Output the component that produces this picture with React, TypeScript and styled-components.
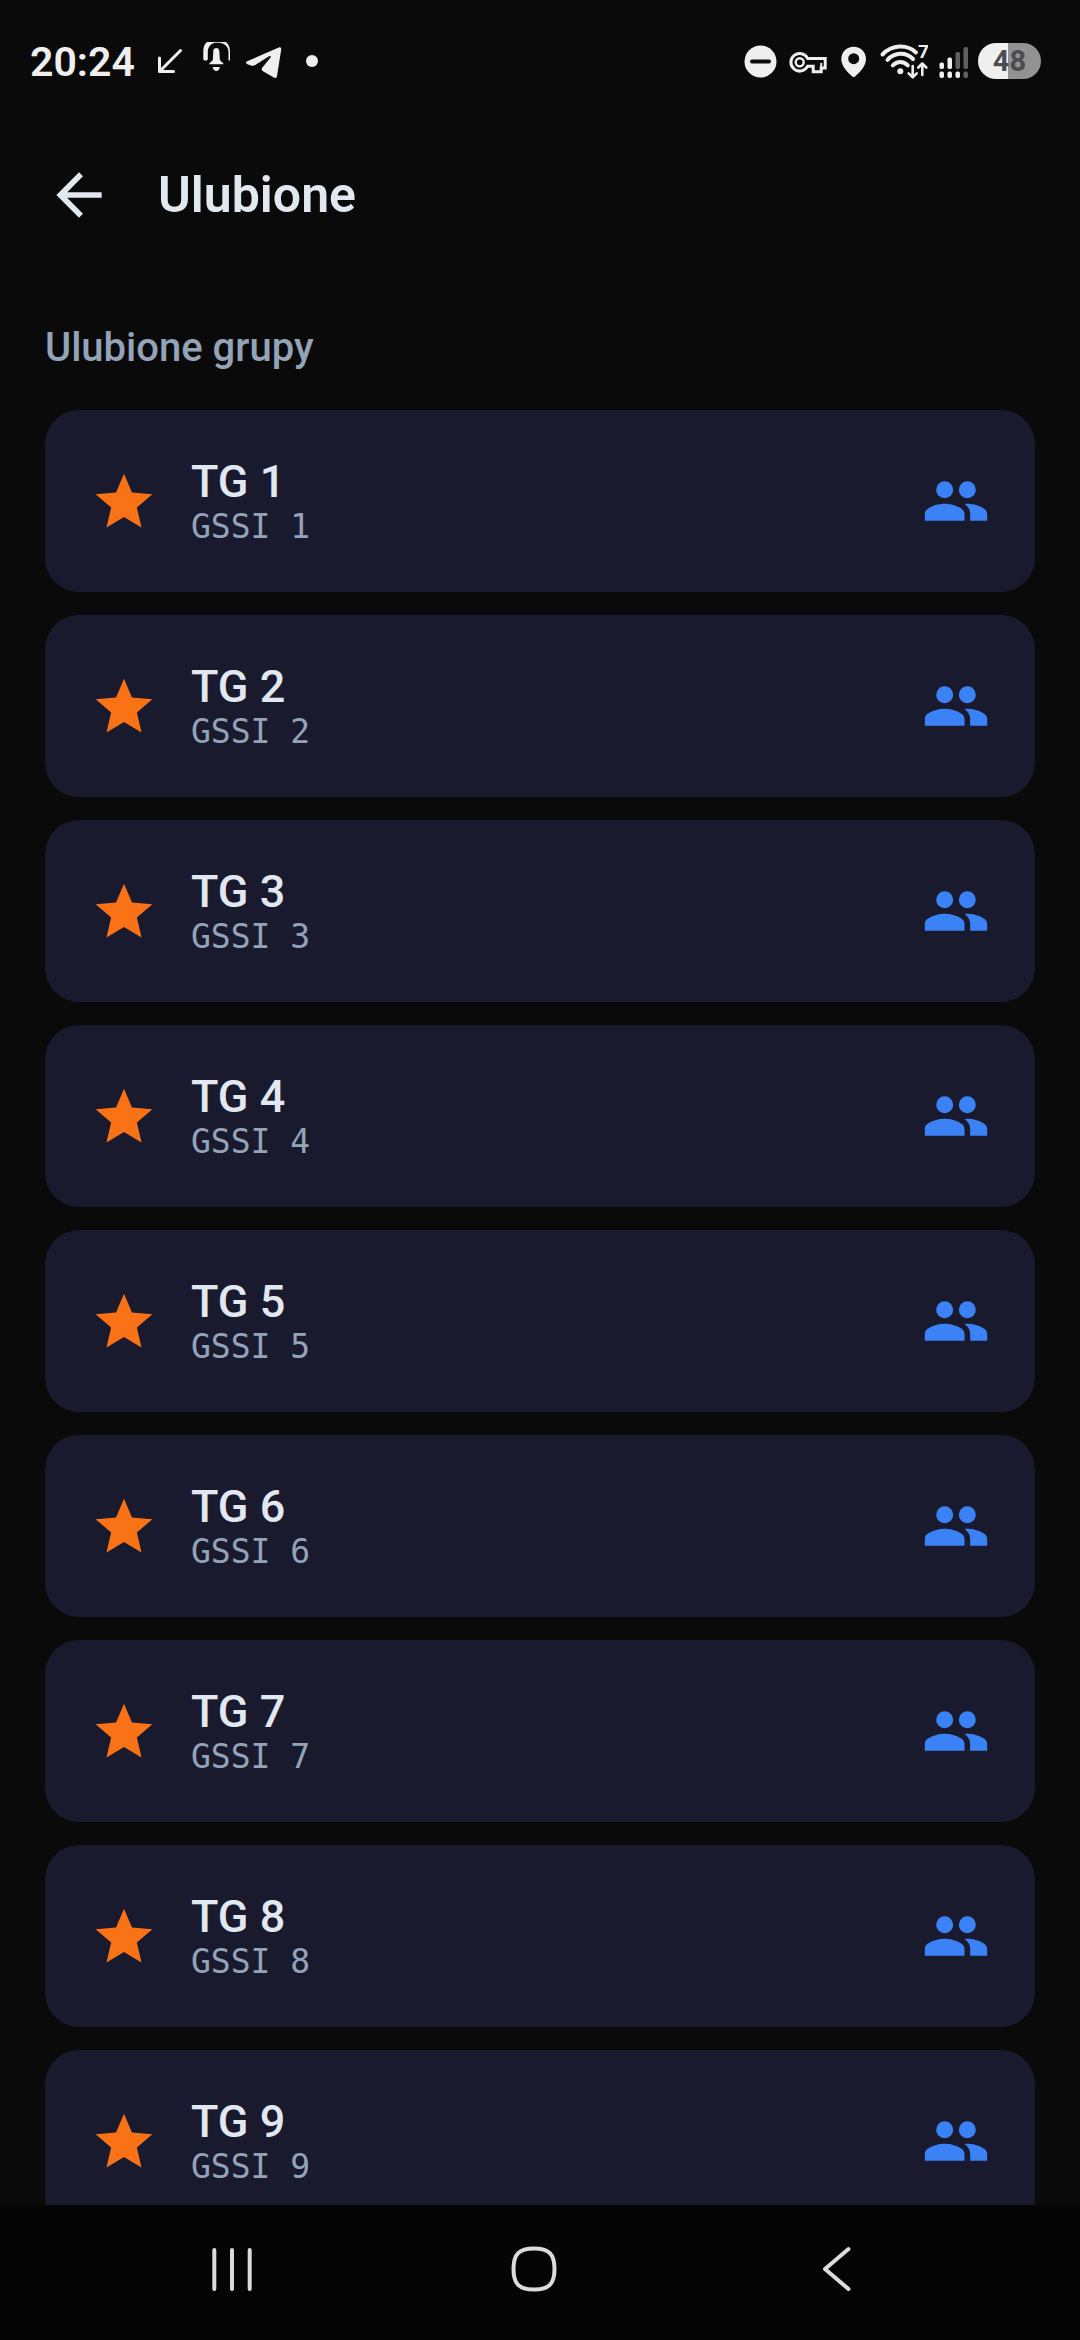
import React from "react";
import styled, { createGlobalStyle } from "styled-components";

const GlobalStyle = createGlobalStyle`
  *, *::before, *::after { box-sizing: border-box; }
  body { margin: 0; background: #0a0a0a; }
`;

const Screen = styled.div`
  display: flex;
  flex-direction: column;
  height: 100vh;
  overflow: hidden;
  background: #0a0a0a;
  color: #e2e8f0;
  font-family: Roboto, "Noto Sans", sans-serif;
`;

const StatusBar = styled.div`
  display: flex;
  flex: none;
  align-items: center;
  justify-content: space-between;
  height: 122px;
  padding: 0 39px 0 30px;
  color: #efefef;
`;

const StatusGroup = styled.div<{ $gap: number }>`
  display: flex;
  align-items: center;
  gap: ${(p) => p.$gap}px;
`;

const Clock = styled.time`
  margin-right: 6px;
  padding-top: 2px;
  font-size: 41px;
  line-height: 48px;
  font-weight: 600;
`;

const Glyph = styled.svg`
  display: block;
  flex: none;
`;

const Battery = styled.div`
  width: 63px;
  height: 36px;
  border-radius: 18px;
  background: linear-gradient(to right, #efefef 47%, #929292 47%);
  color: #4c4c50;
  font-size: 29px;
  line-height: 37px;
  font-weight: 700;
  text-align: center;
`;

const AppBar = styled.header`
  display: flex;
  flex: none;
  align-items: center;
  gap: 45px;
  height: 145px;
  padding: 0 45px;
`;

const IconButton = styled.button`
  display: flex;
  align-items: center;
  justify-content: center;
  padding: 0;
  border: 0;
  background: none;
  color: inherit;
`;

const StarButton = styled(IconButton)`
  padding-top: 2px;
`;

const Title = styled.h1`
  margin: 0;
  font-size: 50px;
  line-height: 68px;
  font-weight: 600;
`;

const Content = styled.main`
  flex: 1;
  min-height: 0;
  overflow: hidden;
  padding: 52px 45px 0;
`;

const SectionTitle = styled.h2`
  margin: 0 0 33px;
  color: #94a3b8;
  font-size: 40px;
  line-height: 58px;
  font-weight: 500;
`;

const GroupList = styled.ul`
  display: flex;
  flex-direction: column;
  gap: 23px;
  margin: 0;
  padding: 0;
  list-style: none;
`;

const GroupCard = styled.li`
  display: flex;
  align-items: center;
  gap: 33px;
  padding: 45px;
  border-radius: 34px;
  background: #1a1a2e;
`;

const GroupText = styled.div`
  flex: 1;
  padding-top: 2px;
`;

const GroupName = styled.div`
  font-size: 45px;
  line-height: 50px;
  font-weight: 500;
`;

const GroupId = styled.div`
  color: #94a3b8;
  font-family: "DejaVu Sans Mono", monospace;
  font-size: 33px;
  line-height: 40px;
`;

const NavBar = styled.nav`
  display: flex;
  flex: none;
  align-items: center;
  justify-content: space-around;
  height: 135px;
  padding: 0 92px 7px 81px;
  background: #050505;
  color: #dcdcdc;
`;

const WifiLabel = styled.text`
  font-size: 19px;
  font-weight: 700;
`;

const StarIcon = () => (
  <Glyph width="68" height="68" viewBox="0 0 24 24" fill="#f97316" aria-hidden="true">
    <path d="M12 17.27 18.18 21l-1.64-7.03L22 9.24l-7.19-.61L12 2 9.19 8.63 2 9.24l5.46 4.73L5.82 21z" />
  </Glyph>
);

const PeopleIcon = () => (
  <Glyph width="68" height="68" viewBox="0 0 24 24" fill="#3b82f6" aria-hidden="true">
    <circle cx="8" cy="8" r="3" />
    <circle cx="16" cy="8" r="3" />
    <path d="M8 13c-2.33 0-7 1.17-7 3.5V19h14v-2.5c0-2.33-4.67-3.5-7-3.5zm8 0c-.29 0-.62.02-.97.05 1.16.84 1.97 1.97 1.97 3.45V19h6v-2.5c0-2.33-4.67-3.5-7-3.5z" />
  </Glyph>
);

const IncomingIcon = () => (
  <Glyph width="36" height="40" viewBox="0 0 36 40" fill="none" stroke="currentColor" strokeWidth="3" strokeLinecap="round" strokeLinejoin="round" aria-hidden="true">
    <path d="M28.5 9.5 7.8 30.2M7.5 17v13.5h14" />
  </Glyph>
);

const BellIcon = () => (
  <Glyph width="36" height="40" viewBox="0 0 36 40" fill="currentColor" aria-hidden="true">
    <path d="M8 1H27C30 3.5 31 7 31 11v8.5h-1.5V11C29.500 6 26 2.500 20.500 1.800H16C12 2.500 8.800 6 8.800 11v7c0 2-4.500 2-4.500 0v-8C4.300 6 5.500 3 8 1z" />
    <path d="M14.300 10c0-4 6-4 6 0l.5 8.500c.4 2 3.700 2.800 3.700 4.800H10.200c0-2 3.300-2.800 3.700-4.800zM13.800 26h7c-.3 5.300-6.700 5.300-7 0z" />
  </Glyph>
);

const TelegramIcon = () => (
  <Glyph width="36" height="40" viewBox="0 0 36 40" fill="currentColor" aria-hidden="true">
    <path d="M.6 20.600 32.800 6.500q2.800-.9 2.400 2.100L31 35.200q-.6 2.800-3.200 1.400L17 30.200q-2.200-1.400-.8-3.400l8.400-10.400q.8-2.200-1.600-1.200L9.600 23.800q-2.200 1.400-4.600.6L.8 23Q-.4 21.600.6 20.600z" />
  </Glyph>
);

const DotIcon = () => (
  <Glyph width="36" height="40" viewBox="0 0 36 40" fill="currentColor" aria-hidden="true">
    <circle cx="19" cy="20" r="6" />
  </Glyph>
);

const DoNotDisturbIcon = () => (
  <Glyph width="34" height="40" viewBox="0 0 34 40" aria-hidden="true">
    <circle cx="16.500" cy="20.500" r="16" fill="currentColor" />
    <path d="M8 20.500h17" stroke="#0a0a0a" strokeWidth="4" strokeLinecap="round" />
  </Glyph>
);

const KeyIcon = () => (
  <Glyph width="42" height="40" viewBox="0 0 42 40" fill="none" stroke="currentColor" strokeWidth="3" aria-hidden="true">
    <path d="M19.600 17.400H37.200V27h-4v3.700h-8v-5.500H19.600A8.800 8.800 0 1 1 19.600 17.400z" />
    <path d="M33.200 22v5" strokeWidth="2" />
    <circle cx="11.700" cy="21.300" r="4" strokeWidth="2.400" />
  </Glyph>
);

const PinIcon = () => (
  <Glyph width="28" height="40" viewBox="0 0 28 40" fill="currentColor" fillRule="evenodd" aria-hidden="true">
    <path d="M13.700 5.700C6.800 5.700 1.300 11 1.300 18c0 8 8.200 15 11 17.500q1.400 1.100 2.800 0C17.900 33 26 26 26 18c0-7-5.400-12.300-12.300-12.300zm0 6.500a5.500 5.500 0 1 1 0 11 5.500 5.500 0 0 1 0-11z" />
  </Glyph>
);

const WifiIcon = () => (
  <Glyph width="50" height="40" viewBox="0 0 50 40" fill="none" stroke="currentColor" strokeLinecap="round" strokeLinejoin="round" aria-hidden="true">
    <path d="M4.500 13.500C14 3.500 29 3 38 11.500M9.500 18.800C17 11 28 11 35 18M14.800 24.300c4.500-4.500 10.500-4.500 15 0" strokeWidth="4" />
    <circle cx="22.300" cy="30.200" r="3" fill="currentColor" stroke="none" />
    <path d="M34.700 25v11M30.700 32.300l4 4 4-4M44.300 34V22.500M40.300 26.500l4-4 4 4" strokeWidth="2.600" />
    <WifiLabel x="40" y="17" fill="currentColor" stroke="none">7</WifiLabel>
  </Glyph>
);

const signalBars = [
  { x: 1.5, top: 21.5, on: true, dotOn: true },
  { x: 9.5, top: 16.5, on: true, dotOn: true },
  { x: 17.5, top: 11, on: false, dotOn: true },
  { x: 25.5, top: 6, on: false, dotOn: false },
];

const SignalIcon = () => (
  <Glyph width="30" height="40" viewBox="0 0 30 40" aria-hidden="true">
    {signalBars.map((b) => (
      <g key={b.x}>
        <rect x={b.x} y={b.top} width="4.500" height={28 - b.top} rx="1.800" fill={b.on ? "#efefef" : "#606060"} />
        <rect x={b.x} y="30.500" width="4.500" height="6.500" rx="1.800" fill={b.dotOn ? "#efefef" : "#606060"} />
      </g>
    ))}
  </Glyph>
);

const groups = Array.from({ length: 9 }, (_, i) => i + 1);

export default function App() {
  return (
    <Screen>
      <GlobalStyle />
      <StatusBar>
        <StatusGroup $gap={11}>
          <Clock>20:24</Clock>
          <IncomingIcon />
          <BellIcon />
          <TelegramIcon />
          <DotIcon />
        </StatusGroup>
        <StatusGroup $gap={10}>
          <DoNotDisturbIcon />
          <KeyIcon />
          <PinIcon />
          <WifiIcon />
          <SignalIcon />
          <Battery>48</Battery>
        </StatusGroup>
      </StatusBar>
      <AppBar>
        <IconButton aria-label="Wstecz">
          <Glyph width="68" height="68" viewBox="0 0 24 24" fill="currentColor">
            <path d="M20 11H7.830l5.590-5.590L12 4l-8 8 8 8 1.410-1.410L7.830 13H20z" />
          </Glyph>
        </IconButton>
        <Title>Ulubione</Title>
      </AppBar>
      <Content>
        <SectionTitle>Ulubione grupy</SectionTitle>
        <GroupList>
          {groups.map((n) => (
            <GroupCard key={n}>
              <StarButton aria-label={`Ulubione: TG ${n}`}>
                <StarIcon />
              </StarButton>
              <GroupText>
                <GroupName>TG {n}</GroupName>
                <GroupId>GSSI {n}</GroupId>
              </GroupText>
              <PeopleIcon />
            </GroupCard>
          ))}
        </GroupList>
      </Content>
      <NavBar>
        <IconButton aria-label="Ostatnie">
          <Glyph width="48" height="48" viewBox="0 0 48 48" fill="none" stroke="currentColor" strokeWidth="4" strokeLinecap="round">
            <path d="M6.300 5v39M24 5v39M41.700 5v39" />
          </Glyph>
        </IconButton>
        <IconButton aria-label="Ekran główny">
          <Glyph width="48" height="48" viewBox="0 0 48 48" fill="none" stroke="currentColor" strokeWidth="4">
            <path d="M24 3.500c15 0 20.500 5.500 20.500 20.500S39 44.500 24 44.500 3.500 39 3.500 24 9 3.500 24 3.500z" />
          </Glyph>
        </IconButton>
        <IconButton aria-label="Cofnij">
          <Glyph width="48" height="48" viewBox="0 0 48 48" fill="none" stroke="currentColor" strokeWidth="4" strokeLinecap="round" strokeLinejoin="round">
            <path d="M35.500 4 12 24l23.500 20" />
          </Glyph>
        </IconButton>
      </NavBar>
    </Screen>
  );
}
